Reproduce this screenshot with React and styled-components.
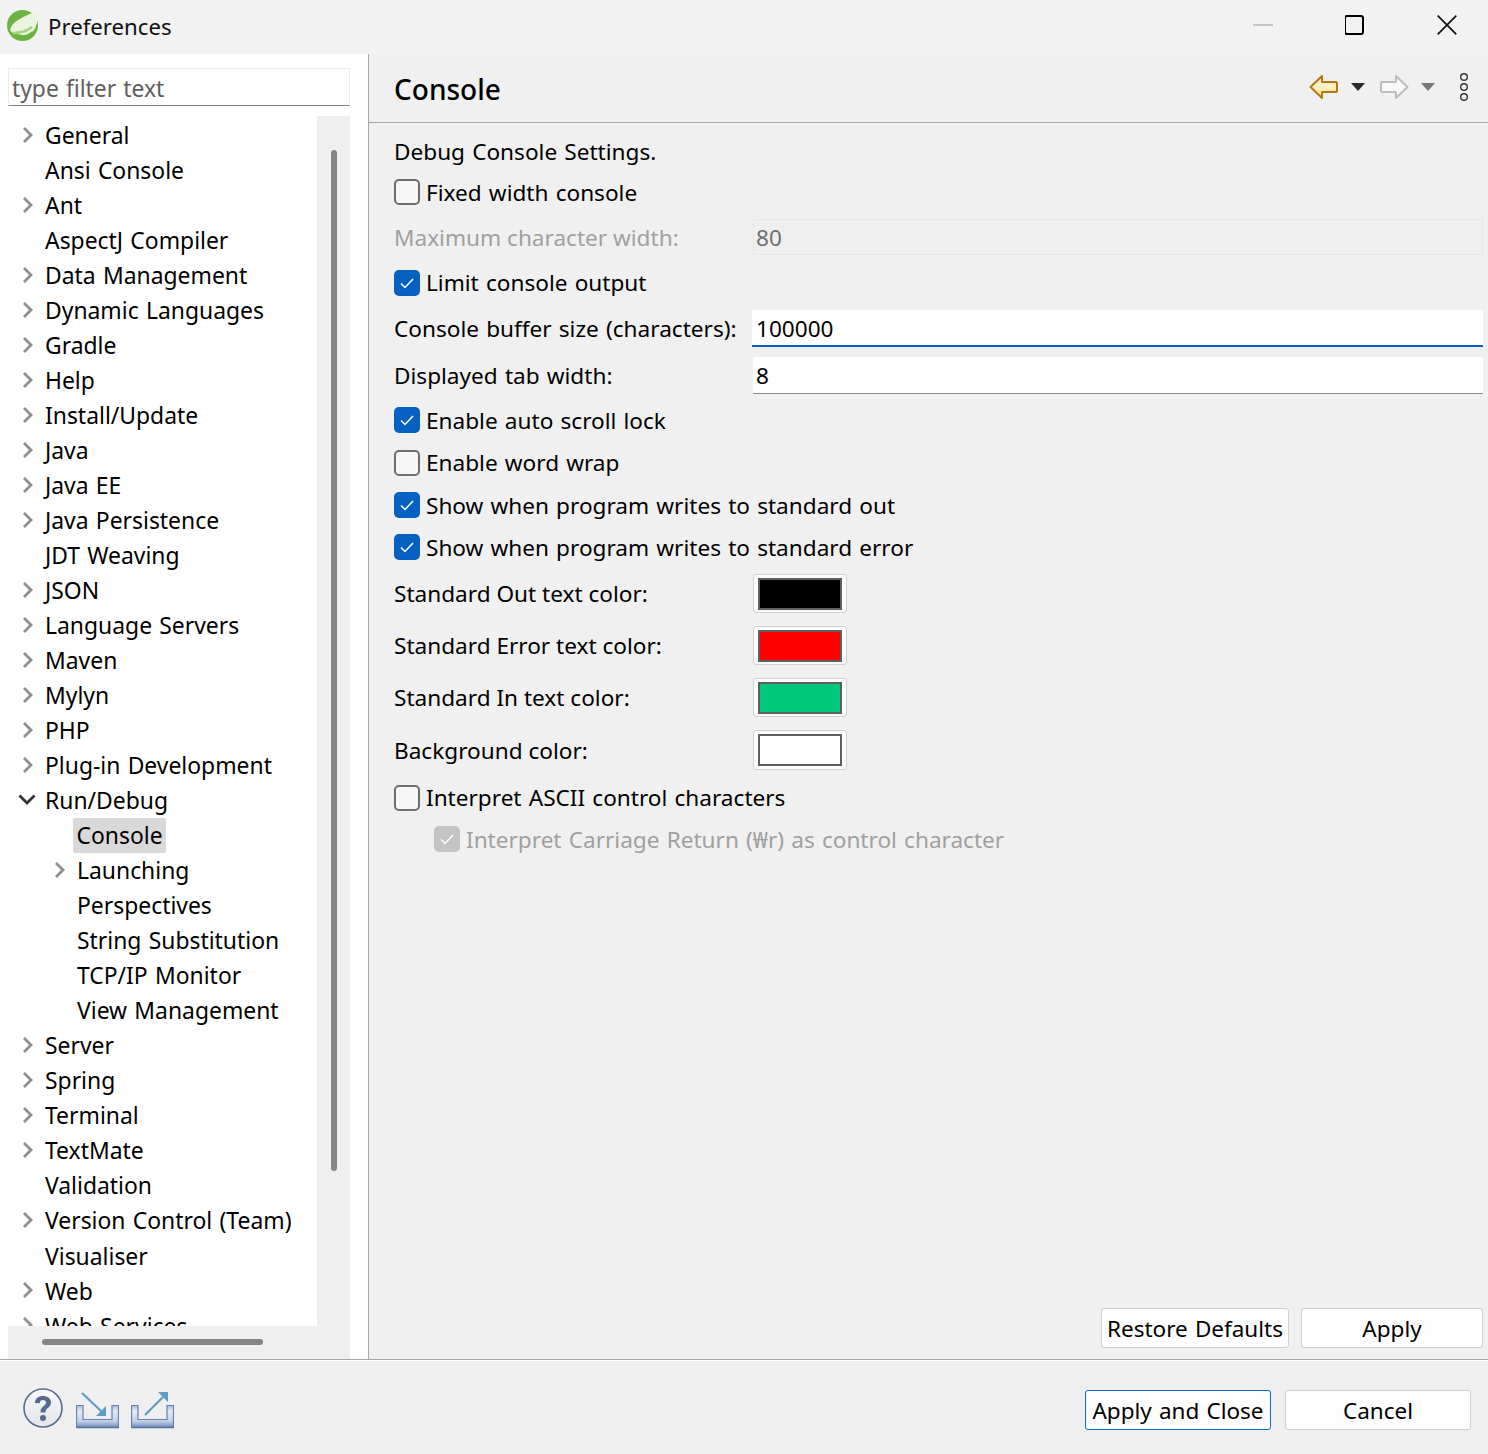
import React from "react";
import styled, { createGlobalStyle } from "styled-components";

const Global = createGlobalStyle`
  html, body { margin: 0; padding: 0; background: #efefef; }
  * { box-sizing: border-box; }
`;

const Page = styled.div`
  width: 1488px; height: 1454px; display: flex; flex-direction: column; overflow: hidden;
  font-family: "Noto Sans", "Noto Sans CJK KR", sans-serif; font-size: 22.5px; word-spacing: 1.3px; color: #000; background: #f0f0f0;
`;
const TitleBar = styled.div`
  height: 54px; flex: none; display: flex; align-items: center; background: #f2f2f2; padding-left: 6px;
`;
const LogoSlot = styled.span`
  display: flex; margin-top: -4px;
`;
const TitleText = styled.span`
  margin-left: 9px; margin-top: -2px; color: #111; font-size: 22.2px;
`;
const WinControls = styled.div`
  margin-left: auto; display: flex; align-items: center; height: 100%; padding-right: 31px; gap: 72px; padding-bottom: 4px;
`;
const Main = styled.div`
  flex: none; height: 1305px; display: flex;
`;
const Sidebar = styled.div`
  width: 369px; flex: none; background: #fff; border-right: 1px solid #a6a6a6; padding: 14px 18px 0 8px; display: flex; flex-direction: column;
`;
const Filter = styled.div`
  height: 38px; flex: none; border: 1px solid #ececec; border-bottom: 1px solid #808080; padding-left: 3px; color: #5e5e5e; line-height: 39px; white-space: nowrap; font-size: 22.8px;
`;
const TreeArea = styled.div`
  margin-top: 10px; height: 1210px; flex: none; display: flex;
`;
const Tree = styled.div`
  width: 309px; flex: none; overflow: hidden; padding-top: 2px; font-size: 22.9px;
`;
const TreeRow = styled.div`
  height: 35.03px; display: flex; align-items: center; padding-left: ${p => p.$level * 32 + 14}px; white-space: nowrap;
`;
const Twist = styled.span`
  width: 11px; height: 16px; margin-right: 12px; margin-top: -2px; flex: none; display: flex; align-items: center;
`;
const TreeLabel = styled.span`
  border-radius: 2px; padding: 0 ${p => p.$selected ? "3.5px" : "0"}; margin-left: ${p => p.$selected ? "-4px" : "0"};
  background: ${p => p.$selected ? "#d9d9d9" : "transparent"}; line-height: 35px;
`;
const VTrack = styled.div`
  width: 33px; flex: none; background: #efefef; padding: 34px 0 0 14px;
`;
const VThumb = styled.div`
  width: 6px; height: 1021px; background: #858585; border-radius: 3px;
`;
const HTrack = styled.div`
  height: 33px; flex: none; background: #efefef; padding: 13px 0 0 34px;
`;
const HThumb = styled.div`
  width: 221px; height: 6px; background: #858585; border-radius: 3px;
`;
const Panel = styled.div`
  flex: 1; display: flex; flex-direction: column; min-width: 0; background: #f0f0f0;
`;
const PanelHead = styled.div`
  height: 69px; flex: none; display: flex; align-items: center; border-bottom: 1px solid #a6a6a6; padding: 4px 0 0 25px;
`;
const PanelTitle = styled.div`
  font-size: 28px; font-weight: 500; margin-top: -3px;
`;
const Tools = styled.div`
  margin-left: auto; display: flex; align-items: center; padding-right: 19px; margin-top: -6px;
`;
const ToolGap = styled.div`
  width: 14px;
`;
const Form = styled.div`
  flex: 1; display: flex; flex-direction: column; padding: 7px 5px 0 25px; font-size: 22.6px;
`;
const Row = styled.div`
  height: ${p => p.$h}px; flex: none; display: flex; align-items: center; white-space: nowrap; color: ${p => p.$muted ? "#a0a0a0" : "#000"};
  padding-left: ${p => p.$indent || 0}px; padding-top: ${p => p.$nudge || 0}px;
`;
const Box = styled.span`
  width: 26px; height: 26px; flex: none; margin-right: 6px; border-radius: 5px; display: flex; align-items: center; justify-content: center;
  border: ${p => p.$on ? "none" : "2px solid #6e6e6e"};
  background: ${p => p.$on ? (p.$dim ? "#c4c4c4" : "#0661c0") : "#f7f7f7"};
`;
const Label = styled.span`
  width: 359px; flex: none; color: inherit; word-spacing: ${p => p.$tight ? "0" : "1.3px"}; padding-top: ${p => p.$nudge || 0}px;
`;
const Field = styled.div`
  flex: 1; height: ${p => p.$h}px; padding-left: ${p => p.$pad}px; padding-top: 2px; display: flex; align-items: center;
  background: ${p => p.$off ? "#efefef" : "#fff"}; color: ${p => p.$off ? "#707070" : "#000"};
  border: ${p => p.$off ? "1px solid #e6e6e6" : "none"};
  border-bottom: ${p => p.$off ? "1px solid #e6e6e6" : p.$focus ? "2px solid #0661c0" : "1px solid #8a8a8a"};
  margin-left: ${p => p.$shift || 0}px;
`;
const SwatchBtn = styled.div`
  width: 94px; height: ${p => p.$h || 39}px; background: #fdfdfd; border: 1px solid #d0d0d0; border-radius: 3px; display: flex; align-items: center; justify-content: center;
`;
const Swatch = styled.div`
  width: 84px; height: 32px; border: 2px solid #5f5f5f; background: ${p => p.$c};
`;
const PanelButtons = styled.div`
  height: 51px; flex: none; display: flex; justify-content: flex-end; gap: 12px; padding-right: 5px;
`;
const Btn = styled.div`
  width: ${p => p.$w}px; height: 40px; background: #fdfdfd; border: 1px solid ${p => p.$def ? "#0a6cc4" : "#d0d0d0"}; border-radius: 3px;
  display: flex; align-items: center; justify-content: center; white-space: nowrap; line-height: 1; padding-top: 2px;
`;
const Footer = styled.div`
  flex: 1; display: flex; align-items: flex-start; border-top: 1px solid #a6a6a6; box-shadow: inset 0 1px 0 #fff; background: #efefef; padding: 30px 17px 0 23px;
`;
const FootIcons = styled.div`
  display: flex; align-items: flex-start; margin-top: -2px;
`;
const HelpSlot = styled.span`
  display: block; margin-right: 13px;
`;
const TraySlot = styled.span`
  display: block; margin-top: 3px; margin-right: 12px;
`;
const FootButtons = styled.div`
  margin-left: auto; display: flex; gap: 14px;
`;

const Chevron = ({ open }) => open ? (
  <svg width="18" height="11" viewBox="0 0 18 11" style={{ marginLeft: -4, flex: "none" }}><path d="M1.500 1.500 9 9l7.500-7.500" fill="none" stroke="#333" strokeWidth="2.800" /></svg>
) : (
  <svg width="11" height="16" viewBox="0 0 11 16" style={{ flex: "none" }}><path d="M2 1 9 8l-7 7" fill="none" stroke="#8f8f8f" strokeWidth="2.800" /></svg>
);

const Check = () => (
  <svg width="16" height="14" viewBox="0 0 16 14"><path d="M2 7.500 6 11.500 14 3" fill="none" stroke="#fff" strokeWidth="1.500" /></svg>
);

const Logo = () => (
  <svg width="33" height="33" viewBox="0 0 33 33" style={{ display: "block" }}>
    <circle cx="16.500" cy="16.500" r="15.500" fill="#6db33f" />
    <path d="M4 21C6 12 17 8 30.500 2c2.500 9 .5 18-6.500 23-3 2-7 1-10 .5-4-.5-7 0-10-4.500z" fill="#eaf4df" />
    <path d="M7 24c6 0 13-1 19-6" fill="none" stroke="#a9d284" strokeWidth="2.500" />
    <path d="M10 27c6 2 12 1 17-4" fill="none" stroke="#6db33f" strokeWidth="2.500" />
  </svg>
);

const Minimize = () => <svg width="20" height="2"><rect width="20" height="2" fill="#c4c4c4" /></svg>;
const Maximize = () => <svg width="20" height="20" viewBox="1 0 20 20"><rect x="1" y="1" width="18" height="18" rx="2" fill="none" stroke="#000" strokeWidth="2" /></svg>;
const CloseX = () => <svg width="20" height="20" viewBox="0 0 20 20"><path d="M.7.7l18.600 18.600M19.300.7.7 19.300" stroke="#111" strokeWidth="1.700" /></svg>;

const BackArrow = () => (
  <svg width="30" height="26" viewBox="0 0 30 26" style={{ display: "block" }}>
    <defs><linearGradient id="ba" x1="0" y1="0" x2="0" y2="1"><stop offset="0" stopColor="#fffbe6" /><stop offset="1" stopColor="#ffe28f" /></linearGradient></defs>
    <path d="M1.500 13 13 2v6h14a2 2 0 0 1 1 1v8a2 2 0 0 1-1 1H13v6z" fill="url(#ba)" stroke="#b5770e" strokeWidth="2" strokeLinejoin="round" />
  </svg>
);
const FwdArrow = () => (
  <svg width="30" height="26" viewBox="0 0 30 26" style={{ display: "block" }}>
    <path d="M28.500 13 17 2v6H3a2 2 0 0 0-1 1v8a2 2 0 0 0 1 1h14v6z" fill="#f8f8f8" stroke="#bdbdbd" strokeWidth="2" strokeLinejoin="round" />
  </svg>
);
const Tri = ({ c, ml }) => (
  <svg width="14" height="8" viewBox="0 0 14 8" style={{ marginLeft: ml, display: "block" }}><path d="M0 0h14L7 8z" fill={c} /></svg>
);
const Dots = () => (
  <svg width="10" height="30" viewBox="0 0 10 30" style={{ marginLeft: 24, display: "block" }}>
    <g fill="none" stroke="#333" strokeWidth="1.400"><circle cx="5" cy="5" r="3.300" /><circle cx="5" cy="15" r="3.300" /><circle cx="5" cy="25" r="3.300" /></g>
  </svg>
);

const Help = () => (
  <svg width="40" height="40" viewBox="0 0 40 40" style={{ display: "block" }}>
    <defs><linearGradient id="hg" x1="0" y1="0" x2="0" y2="1"><stop offset="0" stopColor="#f8f8fa" /><stop offset="1" stopColor="#e4e6ec" /></linearGradient></defs>
    <circle cx="20" cy="20" r="19" fill="url(#hg)" stroke="#5a6c8c" strokeWidth="1.600" />
    <path d="M12 15c0-4.500 3.500-7 8-7s8 2.500 8 6.500c0 5.500-5.500 5-5.500 10h-5c0-6.500 5.500-6 5.500-10 0-1.500-1-2.500-3-2.500s-3 1-3.300 3.300z" fill="#566a8c" />
    <circle cx="20" cy="30" r="3" fill="#566a8c" />
  </svg>
);
const Tray = ({ id }) => (
  <>
    <defs><linearGradient id={id} x1="0" y1="0" x2="0" y2="1"><stop offset="0" stopColor="#a9bbd9" /><stop offset=".25" stopColor="#e3eaf5" /><stop offset=".7" stopColor="#c4d2e8" /><stop offset="1" stopColor="#6f8cbd" /></linearGradient></defs>
    <path d="M.5 14.500h6.500v14h29v-14h6.500v22H.5z" fill={`url(#${id})`} stroke="#6481b3" strokeWidth="1.200" />
    <path d="M.5 36.500h42.500" stroke="#52709f" strokeWidth="1.500" />
  </>
);
const ImportIcon = () => (
  <svg width="43" height="38" viewBox="0 0 43 38" style={{ display: "block" }}>
    <Tray id="t1" />
    <path d="M6 2 26 21" stroke="#5d9cc4" strokeWidth="2.200" />
    <path d="M30 25 H20 L30 15z" fill="#5d9cc4" />
  </svg>
);
const ExportIcon = () => (
  <svg width="43" height="38" viewBox="0 0 43 38" style={{ display: "block" }}>
    <Tray id="t2" />
    <path d="M14 24 33 5" stroke="#5d9cc4" strokeWidth="2.200" />
    <path d="M37 1 V11 L27 1z" fill="#5d9cc4" />
  </svg>
);

const tree = [
  ["General", 0, 1], ["Ansi Console", 0, 0], ["Ant", 0, 1], ["AspectJ Compiler", 0, 0], ["Data Management", 0, 1],
  ["Dynamic Languages", 0, 1], ["Gradle", 0, 1], ["Help", 0, 1], ["Install/Update", 0, 1], ["Java", 0, 1], ["Java EE", 0, 1],
  ["Java Persistence", 0, 1], ["JDT Weaving", 0, 0], ["JSON", 0, 1], ["Language Servers", 0, 1], ["Maven", 0, 1], ["Mylyn", 0, 1],
  ["PHP", 0, 1], ["Plug-in Development", 0, 1], ["Run/Debug", 0, 2], ["Console", 1, 0, true], ["Launching", 1, 1], ["Perspectives", 1, 0],
  ["String Substitution", 1, 0], ["TCP/IP Monitor", 1, 0], ["View Management", 1, 0], ["Server", 0, 1], ["Spring", 0, 1], ["Terminal", 0, 1],
  ["TextMate", 0, 1], ["Validation", 0, 0], ["Version Control (Team)", 0, 1], ["Visualiser", 0, 0], ["Web", 0, 1], ["Web Services", 0, 1],
];

const CheckRow = ({ h = 42, on, dim, indent, muted, children }) => (
  <Row $h={h} $indent={indent} $muted={muted}>
    <Box $on={on} $dim={dim}>{on && <Check />}</Box>
    {children}
  </Row>
);

const ColorRow = ({ h, btn, c, children }) => (
  <Row $h={h}>
    <Label $tight>{children}</Label>
    <SwatchBtn $h={btn}><Swatch $c={c} /></SwatchBtn>
  </Row>
);

export default function App() {
  return (
    <Page>
      <Global />
      <TitleBar>
        <LogoSlot><Logo /></LogoSlot>
        <TitleText>Preferences</TitleText>
        <WinControls>
          <Minimize />
          <Maximize />
          <CloseX />
        </WinControls>
      </TitleBar>
      <Main>
        <Sidebar>
          <Filter>type filter text</Filter>
          <TreeArea>
            <Tree>
              {tree.map(([t, l, k, sel]) => (
                <TreeRow key={t} $level={l}>
                  <Twist>{k > 0 && <Chevron open={k === 2} />}</Twist>
                  <TreeLabel $selected={sel}>{t}</TreeLabel>
                </TreeRow>
              ))}
            </Tree>
            <VTrack><VThumb /></VTrack>
          </TreeArea>
          <HTrack><HThumb /></HTrack>
        </Sidebar>
        <Panel>
          <PanelHead>
            <PanelTitle>Console</PanelTitle>
            <Tools>
              <BackArrow />
              <Tri c="#2b2b2b" ml={12} />
              <ToolGap />
              <FwdArrow />
              <Tri c="#77777c" ml={12} />
              <Dots />
            </Tools>
          </PanelHead>
          <Form>
            <Row $h={41} $nudge={2}>Debug Console Settings.</Row>
            <CheckRow>Fixed width console</CheckRow>
            <Row $h={47} $muted>
              <Label $tight $nudge={2}>Maximum character width:</Label>
              <Field $off $h={36} $pad={2}>80</Field>
            </Row>
            <CheckRow h={45} on>Limit console output</CheckRow>
            <Row $h={46}>
              <Label>Console buffer size (characters):</Label>
              <Field $focus $h={37} $pad={4} $shift={-1}>100000</Field>
            </Row>
            <Row $h={48}>
              <Label>Displayed tab width:</Label>
              <Field $h={37} $pad={3}>8</Field>
            </Row>
            <CheckRow on>Enable auto scroll lock</CheckRow>
            <CheckRow h={43}>Enable word wrap</CheckRow>
            <CheckRow on>Show when program writes to standard out</CheckRow>
            <CheckRow on>Show when program writes to standard error</CheckRow>
            <ColorRow h={51} c="#000">Standard Out text color:</ColorRow>
            <ColorRow h={53} c="#f00">Standard Error text color:</ColorRow>
            <ColorRow h={51} c="#00c87a">Standard In text color:</ColorRow>
            <ColorRow h={54} btn={40} c="#fff">Background color:</ColorRow>
            <CheckRow h={41}>Interpret ASCII control characters</CheckRow>
            <CheckRow on dim indent={40} muted>Interpret Carriage Return (₩r) as control character</CheckRow>
          </Form>
          <PanelButtons>
            <Btn $w={188}>Restore Defaults</Btn>
            <Btn $w={182}>Apply</Btn>
          </PanelButtons>
        </Panel>
      </Main>
      <Footer>
        <FootIcons>
          <HelpSlot><Help /></HelpSlot>
          <TraySlot><ImportIcon /></TraySlot>
          <TraySlot><ExportIcon /></TraySlot>
        </FootIcons>
        <FootButtons>
          <Btn $w={186} $def>Apply and Close</Btn>
          <Btn $w={186}>Cancel</Btn>
        </FootButtons>
      </Footer>
    </Page>
  );
}
